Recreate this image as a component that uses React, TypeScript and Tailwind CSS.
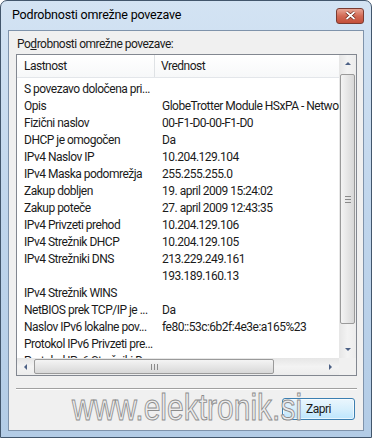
import React from "react";

const rows: [string, string][] = [
  ["S povezavo določena pri...", ""],
  ["Opis", "GlobeTrotter Module HSxPA - Network Interface"],
  ["Fizični naslov", "00-F1-D0-00-F1-D0"],
  ["DHCP je omogočen", "Da"],
  ["IPv4 Naslov IP", "10.204.129.104"],
  ["IPv4 Maska podomrežja", "255.255.255.0"],
  ["Zakup dobljen", "19. april 2009 15:24:02"],
  ["Zakup poteče", "27. april 2009 12:43:35"],
  ["IPv4 Privzeti prehod", "10.204.129.106"],
  ["IPv4 Strežnik DHCP", "10.204.129.105"],
  ["IPv4 Strežniki DNS", "213.229.249.161"],
  ["", "193.189.160.13"],
  ["IPv4 Strežnik WINS", ""],
  ["NetBIOS prek TCP/IP je ...", "Da"],
  ["Naslov IPv6 lokalne pov...", "fe80::53c:6b2f:4e3e:a165%23"],
  ["Protokol IPv6 Privzeti pre...", ""],
  ["Protokol IPv6 Strežniki D...", ""],
];

function Tri({ dir }: { dir: "up" | "down" | "left" | "right" }) {
  const pts =
    dir === "up"
      ? "1,5 4,2 7,5"
      : dir === "down"
      ? "1,2 4,5 7,2"
      : dir === "left"
      ? "5,1 2,4 5,7"
      : "2,1 5,4 2,7";
  return (
    <svg width="8" height="8" viewBox="0 0 8 8">
      <polygon points={pts} fill="#4d6185" />
    </svg>
  );
}

export default function App() {
  return (
    <div
      className="relative w-[372px] h-[438px] overflow-hidden bg-white text-[#1b1b1b]"
      style={{ fontFamily: "Roboto, 'Liberation Sans', sans-serif" }}
    >
      <div className="flex h-full w-full flex-col rounded-t-[7px] border border-[#42566c] bg-gradient-to-b from-[#d3e3f3] via-[#bfd5ec] to-[#b3cce6]">
        {/* title bar */}
        <div className="flex h-[29px] shrink-0 items-center justify-between pl-[11px] pr-[7px]">
          <span className="text-[12.5px] tracking-[-0.2px] leading-none text-black">Podrobnosti omrežne povezave</span>
          <div className="flex h-[16px] w-[28px] items-center justify-center rounded-[3px] border border-[#7a3b31] bg-gradient-to-b from-[#e8a696] via-[#d26a55] to-[#c34f3a]">
            <svg width="11" height="9" viewBox="0 0 11 9">
              <path d="M1.5 1 L9.5 8 M9.5 1 L1.5 8" stroke="#5a1a10" strokeWidth="3" />
              <path d="M1.5 1 L9.5 8 M9.5 1 L1.5 8" stroke="#ffffff" strokeWidth="1.7" />
            </svg>
          </div>
        </div>

        {/* client area */}
        <div className="mx-[7px] mb-[6px] flex flex-1 flex-col border border-[#7f93ab] bg-[#f0f0f0] px-[7px] text-[12px] tracking-[-0.5px]">
          <div className="mt-[5px] h-[17px] leading-[17px] pl-[1px]">
            Po<span className="underline">d</span>robnosti omrežne povezave:
          </div>

          {/* list box */}
          <div className="mt-[1px] flex h-[322px] w-[341px] flex-col border border-[#828790] bg-white">
            <div className="flex h-[303px]">
              <div className="flex flex-1 flex-col overflow-hidden">
                <div className="flex h-[23px] shrink-0 items-center border-b border-[#e3e6ea] bg-gradient-to-b from-white to-[#f7f8f9]">
                  <div className="w-[138px] border-r border-[#dfe2e5] pl-[7px] leading-[22px]">Lastnost</div>
                  <div className="pl-[6px] leading-[22px]">Vrednost</div>
                </div>
                <div className="pt-[3px]">
                  {rows.map(([a, b], i) => (
                    <div key={i} className="flex h-[17px] items-center whitespace-nowrap leading-[17px]">
                      <div className="w-[139px] shrink-0 pl-[7px]">{a}</div>
                      <div className="pl-[6px]">{b}</div>
                    </div>
                  ))}
                </div>
              </div>
              {/* vertical scrollbar */}
              <div className="flex w-[17px] flex-col bg-gradient-to-r from-[#e6e6e6] via-[#f3f3f3] to-[#ececec]">
                <div className="flex h-[17px] items-center justify-center">
                  <Tri dir="up" />
                </div>
                <div className="flex-1 px-[1px] pt-[2px] pb-[17px]">
                  <div className="flex h-[250px] items-center justify-center rounded-[2px] border border-[#9a9a9a] bg-gradient-to-r from-[#f4f4f4] via-[#e6e6e6] to-[#d8d8d8]">
                    <div className="flex flex-col gap-[2px]">
                      <div className="h-[1px] w-[6px] bg-[#8a8a8a]" />
                      <div className="h-[1px] w-[6px] bg-[#8a8a8a]" />
                      <div className="h-[1px] w-[6px] bg-[#8a8a8a]" />
                    </div>
                  </div>
                </div>
                <div className="flex h-[17px] items-center justify-center">
                  <Tri dir="down" />
                </div>
              </div>
            </div>
            {/* horizontal scrollbar */}
            <div className="flex h-[17px]">
              <div className="flex flex-1 items-center bg-gradient-to-b from-[#e6e6e6] via-[#f3f3f3] to-[#ececec]">
                <div className="flex w-[17px] items-center justify-center">
                  <Tri dir="left" />
                </div>
                <div className="flex h-[15px] w-[240px] items-center justify-center rounded-[2px] border border-[#9a9a9a] bg-gradient-to-b from-[#f4f4f4] via-[#e6e6e6] to-[#d8d8d8]">
                  <div className="flex gap-[2px]">
                    <div className="h-[6px] w-[1px] bg-[#8a8a8a]" />
                    <div className="h-[6px] w-[1px] bg-[#8a8a8a]" />
                    <div className="h-[6px] w-[1px] bg-[#8a8a8a]" />
                  </div>
                </div>
                <div className="flex-1" />
                <div className="flex w-[17px] items-center justify-center">
                  <Tri dir="right" />
                </div>
              </div>
              <div className="w-[17px] bg-[#f0f0f0]" />
            </div>
          </div>

          {/* separator */}
          <div className="mt-[12px] h-[2px] w-[341px] border-t border-[#a0a0a0] border-b border-b-white" />

          <div className="mt-[8px] flex justify-end pr-[1px]">
            <div className="flex h-[22px] w-[73px] items-center justify-center rounded-[3px] border border-[#3c7fb1] bg-gradient-to-b from-[#eaf6fd] via-[#d7effc] to-[#bde6fd] shadow-[inset_0_0_0_1px_#ffffffaa] text-[12px]">
              Zapri
            </div>
          </div>
        </div>
      </div>

      {/* watermark */}
      <div
        className="pointer-events-none absolute left-[72px] top-[394px] origin-bottom scale-y-[1.2] text-[30px] leading-[34px] text-[#ececec] [-webkit-text-stroke:0.8px_#8d8d8d]"
        style={{ fontFamily: "'Liberation Sans', sans-serif" }}
      >
        www.elektronik.si
      </div>
    </div>
  );
}
